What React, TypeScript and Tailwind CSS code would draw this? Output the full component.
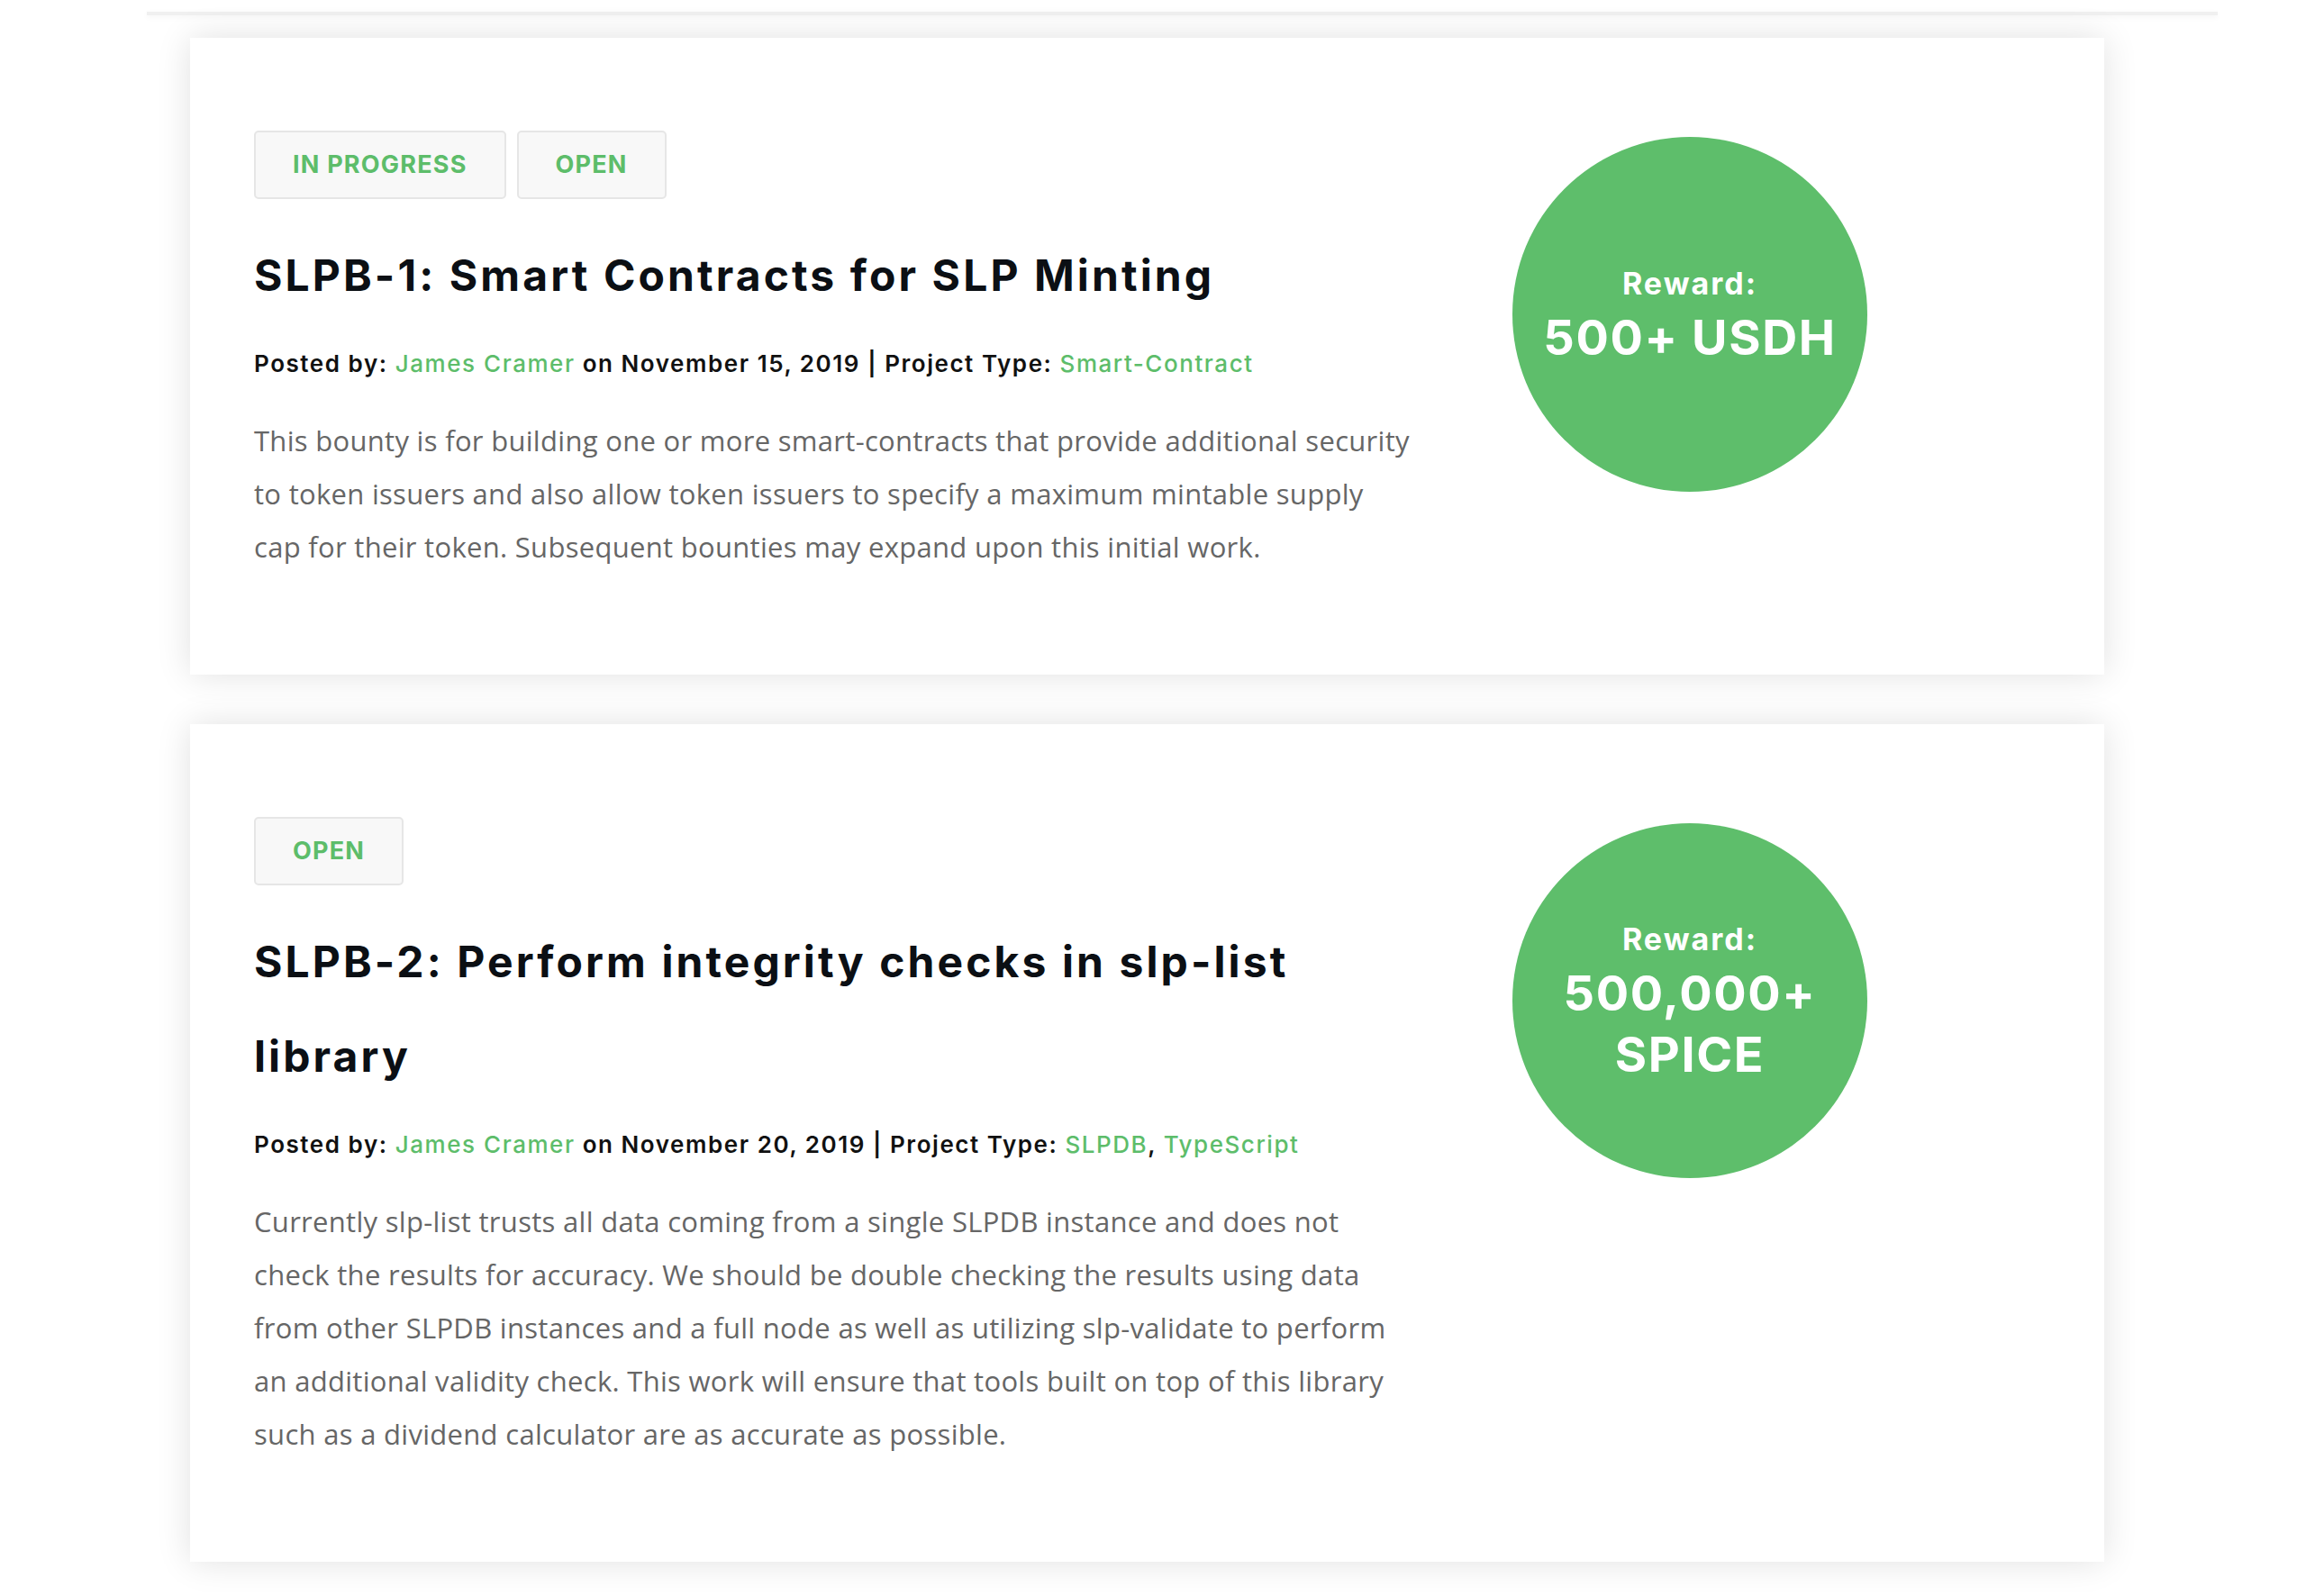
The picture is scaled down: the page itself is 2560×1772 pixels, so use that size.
const bounties = [
  {
    tags: ["IN PROGRESS", "OPEN"],
    title: "SLPB-1: Smart Contracts for SLP Minting",
    author: "James Cramer",
    date: "November 15, 2019",
    types: ["Smart-Contract"],
    body: [
      "This bounty is for building one or more smart-contracts that provide additional security",
      "to token issuers and also allow token issuers to specify a maximum mintable supply",
      "cap for their token. Subsequent bounties may expand upon this initial work.",
    ],
    reward: ["500+ USDH"],
  },
  {
    tags: ["OPEN"],
    title: "SLPB-2: Perform integrity checks in slp-list library",
    author: "James Cramer",
    date: "November 20, 2019",
    types: ["SLPDB", "TypeScript"],
    body: [
      "Currently slp-list trusts all data coming from a single SLPDB instance and does not",
      "check the results for accuracy. We should be double checking the results using data",
      "from other SLPDB instances and a full node as well as utilizing slp-validate to perform",
      "an additional validity check. This work will ensure that tools built on top of this library",
      "such as a dividend calculator are as accurate as possible.",
    ],
    reward: ["500,000+", "SPICE"],
  },
];

const heading = { fontFamily: "Inter, 'Noto Sans', sans-serif" };
const bodyFont = { fontFamily: "'Open Sans', Lato, sans-serif" };

const BountyCard = ({ b }: { b: (typeof bounties)[number] }) => {
  return (
    <div className="w-[2125px] bg-white shadow-[0_0_36px_rgba(0,0,0,0.12)] pl-[71px] pr-[71px] pt-[103px] pb-[112px] flex gap-[107px]">
      <div className="w-[1290px] shrink-0">
        <div className="flex gap-[12px]">
          {b.tags.map((t) => (
            <span
              key={t}
              style={heading}
              className="h-[76px] px-[41px] flex items-center bg-[#f8f8f8] border-2 border-[#e6e6e6] rounded-[5px] text-[27px] tracking-[1.2px] font-bold text-[#5dbd6a]"
            >
              {t}
            </span>
          ))}
        </div>
        <h2 style={heading} className="mt-[32px] text-[48px] leading-[105px] tracking-[3.1px] font-bold text-[#0b0f14]">
          {b.title}
        </h2>
        <p style={heading} className="mt-[26px] text-[26px] leading-[40px] tracking-[1.55px] font-semibold text-[#111]">
          Posted by: <span className="font-medium text-[#5dbd6a]">{b.author}</span> on {b.date} | Project Type:{" "}
          {b.types.map((t, i) => (
            <span key={t}>
              <span className="font-medium text-[#5dbd6a]">{t}</span>
              {i < b.types.length - 1 ? ", " : ""}
            </span>
          ))}
        </p>
        <p style={bodyFont} className="mt-[36px] text-[31px] leading-[59px] tracking-[0.3px] text-[#666]">
          {b.body.map((line) => (
            <span key={line} className="block whitespace-nowrap">
              {line}
            </span>
          ))}
        </p>
      </div>
      <div
        style={heading}
        className="mt-[7px] w-[394px] h-[394px] shrink-0 rounded-full bg-[#5ebe6b] flex flex-col items-center justify-center text-white font-bold text-center"
      >
        <div className="text-[34px] leading-[52px] tracking-[2px]">Reward:</div>
        {b.reward.map((r) => (
          <div key={r} className="text-[54px] leading-[68px] tracking-[1.6px]">
            {r}
          </div>
        ))}
      </div>
    </div>
  );
};

const App = () => {
  return (
    <div className="w-[2560px] min-h-[1772px] bg-white pt-[13px]">
      <div className="ml-[163px] w-[2299px] h-[4px] bg-[#f0f0f0] shadow-[0_2px_6px_rgba(0,0,0,0.05)]"></div>
      <div className="ml-[211px] mt-[25px] flex flex-col gap-[55px]">
        {bounties.map((b) => (
          <BountyCard key={b.title} b={b} />
        ))}
      </div>
    </div>
  );
};

export default App;
